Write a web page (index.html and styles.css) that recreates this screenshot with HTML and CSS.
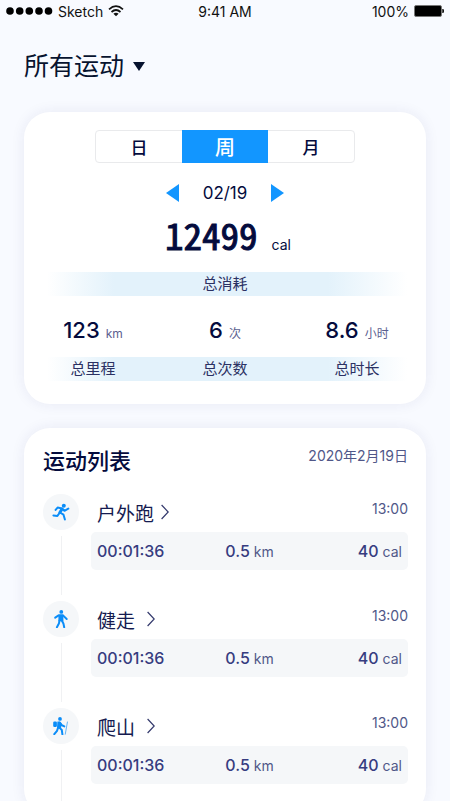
FILE: index.html
```html
<!DOCTYPE html>
<html lang="zh-CN">
<head>
<meta charset="utf-8">
<meta name="viewport" content="width=device-width, initial-scale=1">
<title>所有运动</title>
<link rel="stylesheet" href="styles.css">
</head>
<body>
<header class="status">
  <div class="status-left">
    <svg class="signal" viewBox="0 0 47 8" aria-hidden="true"><circle cx="4" cy="4" r="3.8"/><circle cx="13.7" cy="4" r="3.8"/><circle cx="23.3" cy="4" r="3.8"/><circle cx="33" cy="4" r="3.8"/><circle cx="42.5" cy="4" r="3.8"/></svg>
    <span>Sketch</span>
    <svg class="wifi" viewBox="0 0 16 12" aria-hidden="true"><path d="M1 4.4Q8-2 15 4.4M3.5 7Q8 3 12.5 7" fill="none" stroke="#111" stroke-width="1.7"/><path d="M5.4 8.7Q8 6.8 10.6 8.7L8 11.3Z" fill="#111"/></svg>
  </div>
  <span>9:41 AM</span>
  <div class="status-right">
    <span>100%</span>
    <svg class="battery" viewBox="0 0 30 12" aria-hidden="true"><rect x=".5" y=".5" width="27" height="11" rx="1.5" fill="#000" stroke="#777"/><path d="M28.3 4h.7q1 0 1 2t-1 2h-.7z"/></svg>
  </div>
</header>
<main class="page">
  <label class="picker">
    <select class="picker-select" aria-label="运动类型"><option>所有运动</option></select>
    <svg class="picker-arrow" viewBox="0 0 12 9" aria-hidden="true"><path d="M0 0h12L6 9z"/></svg>
  </label>

  <section class="card summary">
    <div class="tabs">
      <button class="tab" type="button">日</button>
      <button class="tab tab-active" type="button">周</button>
      <button class="tab" type="button">月</button>
    </div>
    <div class="date-nav">
      <button class="arrow" type="button" aria-label="上一周"><svg viewBox="0 0 13 18"><path d="M13 0v18L0 9z"/></svg></button>
      <span>02/19</span>
      <button class="arrow" type="button" aria-label="下一周"><svg viewBox="0 0 13 18"><path d="M0 0v18l13-9z"/></svg></button>
    </div>
    <div class="total"><strong class="total-value">12499</strong><span class="total-unit">cal</span></div>
    <div class="band band-total">总消耗</div>
    <div class="stats">
      <div><strong class="stat-value">123</strong><span class="stat-unit">km</span></div>
      <div><strong class="stat-value">6</strong><span class="stat-unit">次</span></div>
      <div><strong class="stat-value">8.6</strong><span class="stat-unit">小时</span></div>
    </div>
    <div class="band band-stats"><span>总里程</span><span>总次数</span><span>总时长</span></div>
  </section>

  <section class="card log">
    <div class="log-head"><h2 class="log-title">运动列表</h2><time class="log-date">2020年2月19日</time></div>
    <ul class="log-list">
      <li class="entry">
        <div class="rail"><span class="badge"><svg class="sport" viewBox="0 0 18 18" aria-hidden="true"><circle cx="11.8" cy="2.8" r="2"/><path class="limb" d="M3.6 6.9L5.6 4.6L10 5.5L12.4 7.8L16.3 5.6"/><path class="torso" d="M10 6L7.9 9.5"/><path class="limb" d="M1.4 12.4L5.4 12.9L7.9 9.5L11.5 11.7L12.9 16.6"/></svg></span></div>
        <a class="entry-name" href="#run">户外跑<svg class="chevron" viewBox="0 0 8 16" aria-hidden="true"><path d="M.6 1L7.2 8L.6 15"/></svg></a>
        <time class="entry-time">13:00</time>
        <div class="detail"><b>00:01:36</b><span><b>0.5</b> km</span><span><b>40</b> cal</span></div>
      </li>
      <li class="entry">
        <div class="rail"><span class="badge"><svg class="sport" viewBox="0 0 18 18" aria-hidden="true"><circle cx="9.3" cy="1.9" r="1.9"/><path class="limb" d="M3.2 7.6L6.6 5.4H11L14.7 9"/><path d="M6.4 4.5h5v6.8h-5z"/><path class="limb" d="M7.5 10.5L6.9 13.6L4.9 17.2M9.8 10.5L11.4 13.4L12.2 17.3"/></svg></span></div>
        <a class="entry-name entry-name-wide" href="#walk">健走<svg class="chevron" viewBox="0 0 8 16" aria-hidden="true"><path d="M.6 1L7.2 8L.6 15"/></svg></a>
        <time class="entry-time">13:00</time>
        <div class="detail"><b>00:01:36</b><span><b>0.5</b> km</span><span><b>40</b> cal</span></div>
      </li>
      <li class="entry">
        <div class="rail"><span class="badge"><svg class="sport" viewBox="0 0 18 18" aria-hidden="true"><circle cx="8" cy="1.9" r="1.9"/><rect x="1.2" y="4.5" width="3.7" height="5.4" rx="1.2"/><path d="M5.4 4.5H8l1.7 2-.7 4.9H5z"/><path class="limb" d="M8 5.7L9.5 8L12.3 9.4M6.1 10.6L5 13.8L2.3 17.2M7.4 10.6L9.8 13L10.4 17.4"/><path class="stick" d="M15.5 4.6L13.2 17.6"/></svg></span></div>
        <a class="entry-name entry-name-wide" href="#climb">爬山<svg class="chevron" viewBox="0 0 8 16" aria-hidden="true"><path d="M.6 1L7.2 8L.6 15"/></svg></a>
        <time class="entry-time">13:00</time>
        <div class="detail"><b>00:01:36</b><span><b>0.5</b> km</span><span><b>40</b> cal</span></div>
      </li>
    </ul>
  </section>
</main>
</body>
</html>
```
FILE: styles.css
```css
* { box-sizing: border-box; }
body {
  margin: 0;
  background: #f8faff;
  color: #040b3d;
  font-family: Inter, "Noto Sans CJK SC", sans-serif;
}
button { padding: 0; border: 0; background: none; color: inherit; font: inherit; cursor: pointer; }
svg { display: block; }

.status {
  display: grid;
  grid-template-columns: 1fr auto 1fr;
  align-items: center;
  height: 22px;
  padding: 0 6px;
  color: #111;
  font-size: 14px;
}
.status-left, .status-right { display: flex; align-items: center; gap: 5px; }
.status-right { justify-content: flex-end; }
.signal { width: 47px; height: 8px; }
.wifi { width: 16px; height: 12px; }
.battery { width: 30px; height: 12px; }

.page { padding: 25px 24px 0; }
.picker { display: flex; align-items: center; gap: 8px; width: max-content; height: 38px; }
.picker-select {
  appearance: none;
  padding: 0;
  border: 0;
  background: none;
  color: #07132f;
  font: 400 25px/38px Inter, "Noto Sans CJK SC", sans-serif;
}
.picker-arrow { width: 12px; height: 9px; fill: #07132f; }

.card {
  background: #fff;
  border-radius: 26px;
  box-shadow: 0 0 14px rgba(40, 40, 110, 0.08);
}
.summary { margin-top: 27px; padding: 18px 3px 23px; }
.tabs {
  display: grid;
  grid-template-columns: repeat(3, 1fr);
  width: 260px;
  height: 33px;
  margin: 0 auto;
  border: 1px solid #e9eaec;
  border-radius: 4px;
}
.tab { font-size: 17px; font-weight: 500; }
.tab-active { margin: -1px 0; background: #1296ff; color: #fff; font-size: 20px; }
.date-nav {
  display: flex;
  justify-content: center;
  align-items: center;
  gap: 24px;
  margin-top: 18px;
  font-size: 17px;
  line-height: 24px;
}
.arrow svg { width: 13px; height: 18px; fill: #1296ff; }
.total { display: flex; justify-content: center; align-items: baseline; gap: 14px; height: 67px; padding: 4px 0 0 6px; }
.total-value {
  font: 400 37px/50px "Noto Sans Mono CJK SC", "Noto Sans CJK SC", sans-serif;
  -webkit-text-stroke: 1px currentColor;
}
.total-unit { font-size: 14px; }
.band {
  height: 24px;
  color: #2b3163;
  font-size: 15px;
  line-height: 24px;
  text-align: center;
  background: linear-gradient(90deg, #fff 5%, #e3f2fb 22%, #e3f2fb 76%, #fff 96%);
}
.stats, .band-stats { display: grid; grid-template-columns: repeat(3, 1fr); text-align: center; }
.stats { padding: 18px 0 7px; line-height: 32px; }
.stat-value { font-size: 22px; font-weight: 500; }
.stat-unit { margin-left: 6px; color: #5b608f; font-size: 12px; }

.log { margin-top: 24px; padding: 16px 18px 0 19px; }
.log-head { display: flex; justify-content: space-between; }
.log-title { margin: 0; font-size: 22px; font-weight: 500; line-height: 34px; }
.log-date { color: #505788; font-size: 14px; line-height: 24px; }
.log-list { margin: 0; padding: 16px 0 0; list-style: none; }
.entry {
  display: grid;
  grid-template-columns: 36px 1fr auto;
  grid-template-rows: 38px 38px;
  column-gap: 12px;
  height: 107px;
}
.rail { display: flex; flex-direction: column; grid-row: 1 / 3; height: 107px; }
.rail::after { content: ""; flex: 1; width: 1px; margin: 6px auto; background: #f0f1f3; }
.badge {
  display: grid;
  place-items: center;
  width: 36px;
  height: 36px;
  border-radius: 50%;
  background: #f5f7f9;
}
.sport { width: 18px; height: 18px; fill: #0b8df8; }
.limb, .torso { fill: none; stroke: #0b8df8; stroke-width: 2; stroke-linecap: round; stroke-linejoin: round; }
.torso { stroke-width: 3; }
.stick { fill: none; stroke: #65b5f5; stroke-width: 1; }
.entry-name {
  display: flex;
  align-items: center;
  gap: 7px;
  height: 36px;
  padding-left: 6px;
  color: #151b50;
  font-size: 19px;
  text-decoration: none;
}
.entry-name-wide { gap: 12px; }
.chevron { width: 8px; height: 16px; fill: none; stroke: #343a6d; stroke-width: 1.2; }
.entry-time { color: #505788; font-size: 14px; line-height: 30px; }
.detail {
  display: grid;
  grid-column: 2 / 4;
  grid-template-columns: repeat(3, 1fr);
  align-items: center;
  padding: 0 6px;
  border-radius: 5px;
  background: #f5f7f9;
  color: #505788;
  font-size: 14px;
}
.detail b { color: #363c80; font-size: 16px; font-weight: 500; }
.detail span { text-align: center; }
.detail span:last-child { text-align: right; }
```
